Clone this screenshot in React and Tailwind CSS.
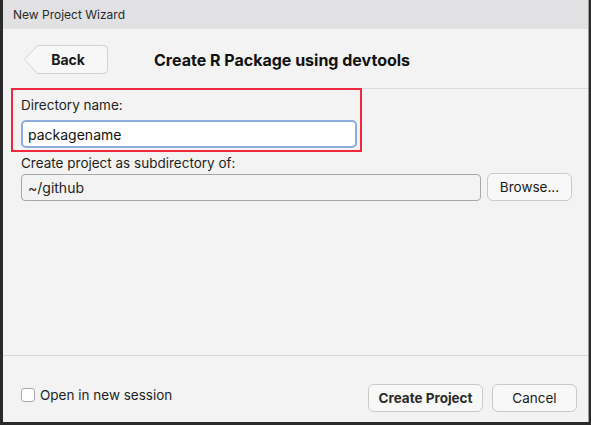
import React from "react";

const font = { fontFamily: "Inter, 'Open Sans', sans-serif" };

const BackButton = () => (
  <button className="relative w-[84px] h-[29px] flex items-center justify-center pl-[4px]">
    <svg className="absolute inset-0" width="84" height="29" viewBox="0 0 84 29">
      <path
        d="M13.5 0.5 H79.5 A4 4 0 0 1 83.5 4.5 V24.5 A4 4 0 0 1 79.5 28.5 H13.5 L0.5 14.5 Z"
        fill="#f7f7f7"
        stroke="#d2d2d2"
      />
    </svg>
    <span className="relative text-[14px] font-bold text-[#1a1a1a]">Back</span>
  </button>
);

export default function App() {
  return (
    <div
      className="w-[591px] h-[425px] bg-[#2a2a2a] pl-[3px] pr-[2px] pb-[3px] overflow-hidden"
      style={font}
    >
      <div className="h-full flex flex-col bg-[#f2f3f2] border-r border-[#9a9a9a]">
        {/* Title bar */}
        <div className="h-[29px] shrink-0 bg-[#e1e1e4] flex items-center px-[10px] text-[12px] text-[#2a2a2a]">
          New Project Wizard
        </div>

        {/* Header */}
        <div className="h-[60px] shrink-0 flex items-center pl-[14px] pt-[2px] border-b border-[#dcdcdc] ml-[7px]">
          <BackButton />
          <h1 className="ml-[46px] text-[16px] font-bold text-[#111]">
            Create R Package using devtools
          </h1>
        </div>

        {/* Body */}
        <div className="flex-1 flex flex-col pl-[8px] pr-[14px]">
          <div className="w-[351px] h-[64px] border-[2px] border-[#f0283f] -mt-[1px] px-[8px] pt-[6px]">
            <div className="text-[13.5px] text-[#1f1f1f] leading-[18px]">Directory name:</div>
            <div className="mt-[6px] w-[336px] h-[28px] bg-white border-[2px] border-[#8fabdf] rounded-[5px] flex items-center px-[5px] text-[14px] text-[#111]">
              packagename
            </div>
          </div>
          <div className="pl-[10px] mt-[2px] text-[13.5px] text-[#1f1f1f] leading-[18px]">
            Create project as subdirectory of:
          </div>
          <div className="pl-[10px] mt-[1px] flex items-center gap-[6px]">
            <div className="w-[460px] h-[27px] border border-[#a7a7a7] rounded-[4px] flex items-center px-[6px] text-[14px] text-[#222]">
              ~/github
            </div>
            <button className="w-[85px] h-[28px] bg-[#f8f8f8] border border-[#cacaca] rounded-[6px] text-[13.5px] text-[#1a1a1a]">
              Browse...
            </button>
          </div>
        </div>

        {/* Footer */}
        <div className="h-[67px] shrink-0 border-t border-[#d6d6d6] flex items-start justify-between pl-[18px] pr-[11px] pt-[28px]">
          <label className="mt-[1px] flex items-center gap-[5px] text-[13.5px] text-[#1f1f1f]">
            <span className="w-[14px] h-[14px] bg-white border border-[#a9a9a9] rounded-[3px]" />
            Open in new session
          </label>
          <div className="flex items-center gap-[9px]">
            <button className="w-[115px] h-[28px] bg-[#f8f8f8] border border-[#cacaca] rounded-[6px] text-[13.5px] font-bold text-[#2a2a2a]">
              Create Project
            </button>
            <button className="w-[85px] h-[28px] bg-[#f8f8f8] border border-[#cacaca] rounded-[6px] text-[13.5px] text-[#1a1a1a]">
              Cancel
            </button>
          </div>
        </div>
      </div>
    </div>
  );
}
